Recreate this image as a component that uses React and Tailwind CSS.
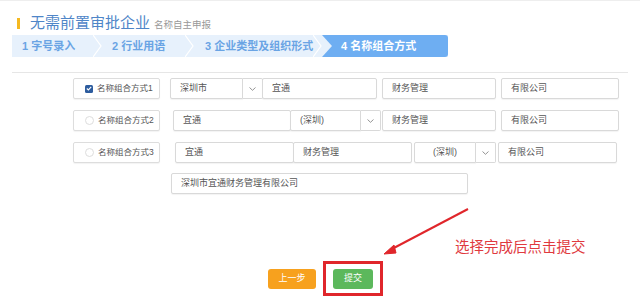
import React from "react";

const font = { fontFamily: '"Liberation Sans", "Noto Sans CJK SC", sans-serif' };

const Box = ({ w, children, className = "" }) => (
  <div className={`h-[21px] border border-[#d9d9d9] rounded-[2px] bg-white flex items-center px-[9px] text-[9px] text-[#555] whitespace-nowrap shadow-[0_1px_1px_rgba(0,0,0,0.05)] ${className}`} style={{ width: w }}>
    {children}
  </div>
);

const Drop = () => (
  <div className="w-[20px] h-[21px] border border-[#d9d9d9] border-l-0 rounded-r-[2px] bg-white flex items-center justify-center">
    <svg width="7" height="4" viewBox="0 0 7 4"><path d="M0.5 0.5 L3.5 3.3 L6.5 0.5" fill="none" stroke="#888" strokeWidth="0.9" /></svg>
  </div>
);

const Label = ({ n, checked }) => (
  <div className="w-[87px] h-[21px] border border-[#ddd] rounded-[2px] bg-white flex items-center pl-[11px] gap-[4px] text-[8.5px] text-[#555] whitespace-nowrap shadow-[0_1px_1px_rgba(0,0,0,0.05)]">
    {checked ? (
      <span className="w-[8px] h-[8px] shrink-0 rounded-[1.5px] bg-[#2d5c9e] flex items-center justify-center">
        <svg width="6" height="5" viewBox="0 0 6 5"><path d="M0.8 2.5 L2.4 3.9 L5.2 0.9" fill="none" stroke="#fff" strokeWidth="1.1" /></svg>
      </span>
    ) : (
      <span className="w-[9px] h-[9px] shrink-0 rounded-full border border-[#ddd] bg-white" />
    )}
    <span>名称组合方式{n}</span>
  </div>
);

const steps = ["1 字号录入", "2 行业用语", "3 企业类型及组织形式"];

export default function App() {
  return (
    <div className="w-[640px] h-[299px] bg-white relative overflow-hidden border-t border-[#eee]" style={font}>
      {/* title */}
      <div className="flex items-end pl-[17px] pt-[11px] h-[32px]">
        <span className="w-[3px] h-[11px] bg-[#f5b921] mb-[4px]" />
        <span className="ml-[10px] text-[15px] leading-[20px] text-[#4f86c8]">无需前置审批企业</span>
        <span className="ml-[4px] text-[9.5px] leading-[16px] text-[#999]">名称自主申报</span>
      </div>

      {/* steps */}
      <div className="mt-[2px] ml-[12px] w-[436px] h-[22px] flex bg-[#e7f1fc] text-[11px] font-semibold text-[#6aa4e4] whitespace-nowrap">
        {steps.map((s, i) => (
          <div key={s} className="relative flex items-center" style={{ width: [90, 92, 128][i], paddingLeft: [10, 10, 11][i] }}>
            {s}
            <svg className="absolute right-0 top-0" width="9" height="22" viewBox="0 0 9 22"><path d="M0 0 L8 11 L0 22" fill="none" stroke="#fff" strokeWidth="1.2" /></svg>
          </div>
        ))}
        <div className="relative flex-1 flex items-center bg-[#6eaef2] text-white pl-[19px] rounded-r-[3px]">
          <svg className="absolute left-0 top-0" width="10" height="22" viewBox="0 0 10 22"><path d="M0 0 L10 11 L0 22 Z" fill="#e7f1fc" /></svg>
          4 名称组合方式
        </div>
      </div>

      <div className="mt-[15px] mx-[12px] h-px bg-[#e6e6e6]" />

      {/* rows */}
      <div className="pl-[73px] mt-[5px] flex flex-col gap-[11px]">
        <div className="flex items-center">
          <Label n={1} checked />
          <Box w={73} className="ml-[10px] rounded-r-none">深圳市</Box>
          <Drop />
          <Box w={115} className="-ml-px">宜通</Box>
          <Box w={114} className="ml-[5px]">财务管理</Box>
          <Box w={118} className="ml-[5px]">有限公司</Box>
        </div>
        <div className="flex items-center">
          <Label n={2} />
          <Box w={118} className="ml-[13px]">宜通</Box>
          <Box w={71} className="-ml-px rounded-r-none">(深圳)</Box>
          <Drop />
          <Box w={114} className="ml-[1px]">财务管理</Box>
          <Box w={118} className="ml-[5px]">有限公司</Box>
        </div>
        <div className="flex items-center">
          <Label n={3} />
          <Box w={119} className="ml-[15px]">宜通</Box>
          <Box w={119} className="-ml-px">财务管理</Box>
          <Box w={62} className="ml-[2px] rounded-r-none justify-center">(深圳)</Box>
          <Drop />
          <Box w={119} className="ml-[2px]">有限公司</Box>
        </div>
      </div>

      <div className="ml-[171px] mt-[10px]">
        <Box w={297} className="h-[20px]">深圳市宜通财务管理有限公司</Box>
      </div>

      {/* buttons */}
      <div className="ml-[268px] mt-[67px] flex items-center">
        <button className="w-[48px] h-[20px] rounded-[3px] bg-[#f7a11e] text-white text-[9px]">上一步</button>
        <div className="ml-[7px] w-[60px] h-[35px] border-[3px] border-[#e0262b] flex items-center justify-center">
          <button className="w-[40px] h-[20px] rounded-[3px] bg-[#5cb85c] text-white text-[9px]">提交</button>
        </div>
      </div>

      {/* annotation */}
      <svg className="absolute left-0 top-0" width="640" height="299" viewBox="0 0 640 299">
        <line x1="468" y1="208" x2="390" y2="249" stroke="#e0262b" strokeWidth="2" />
        <path d="M384 253 L394 244 L396 252 Z" fill="#e0262b" stroke="#e0262b" strokeWidth="1" />
      </svg>
      <div className="absolute left-[455px] top-[236px] text-[14.5px] leading-[20px] text-[#e0393e]">选择完成后点击提交</div>
    </div>
  );
}
